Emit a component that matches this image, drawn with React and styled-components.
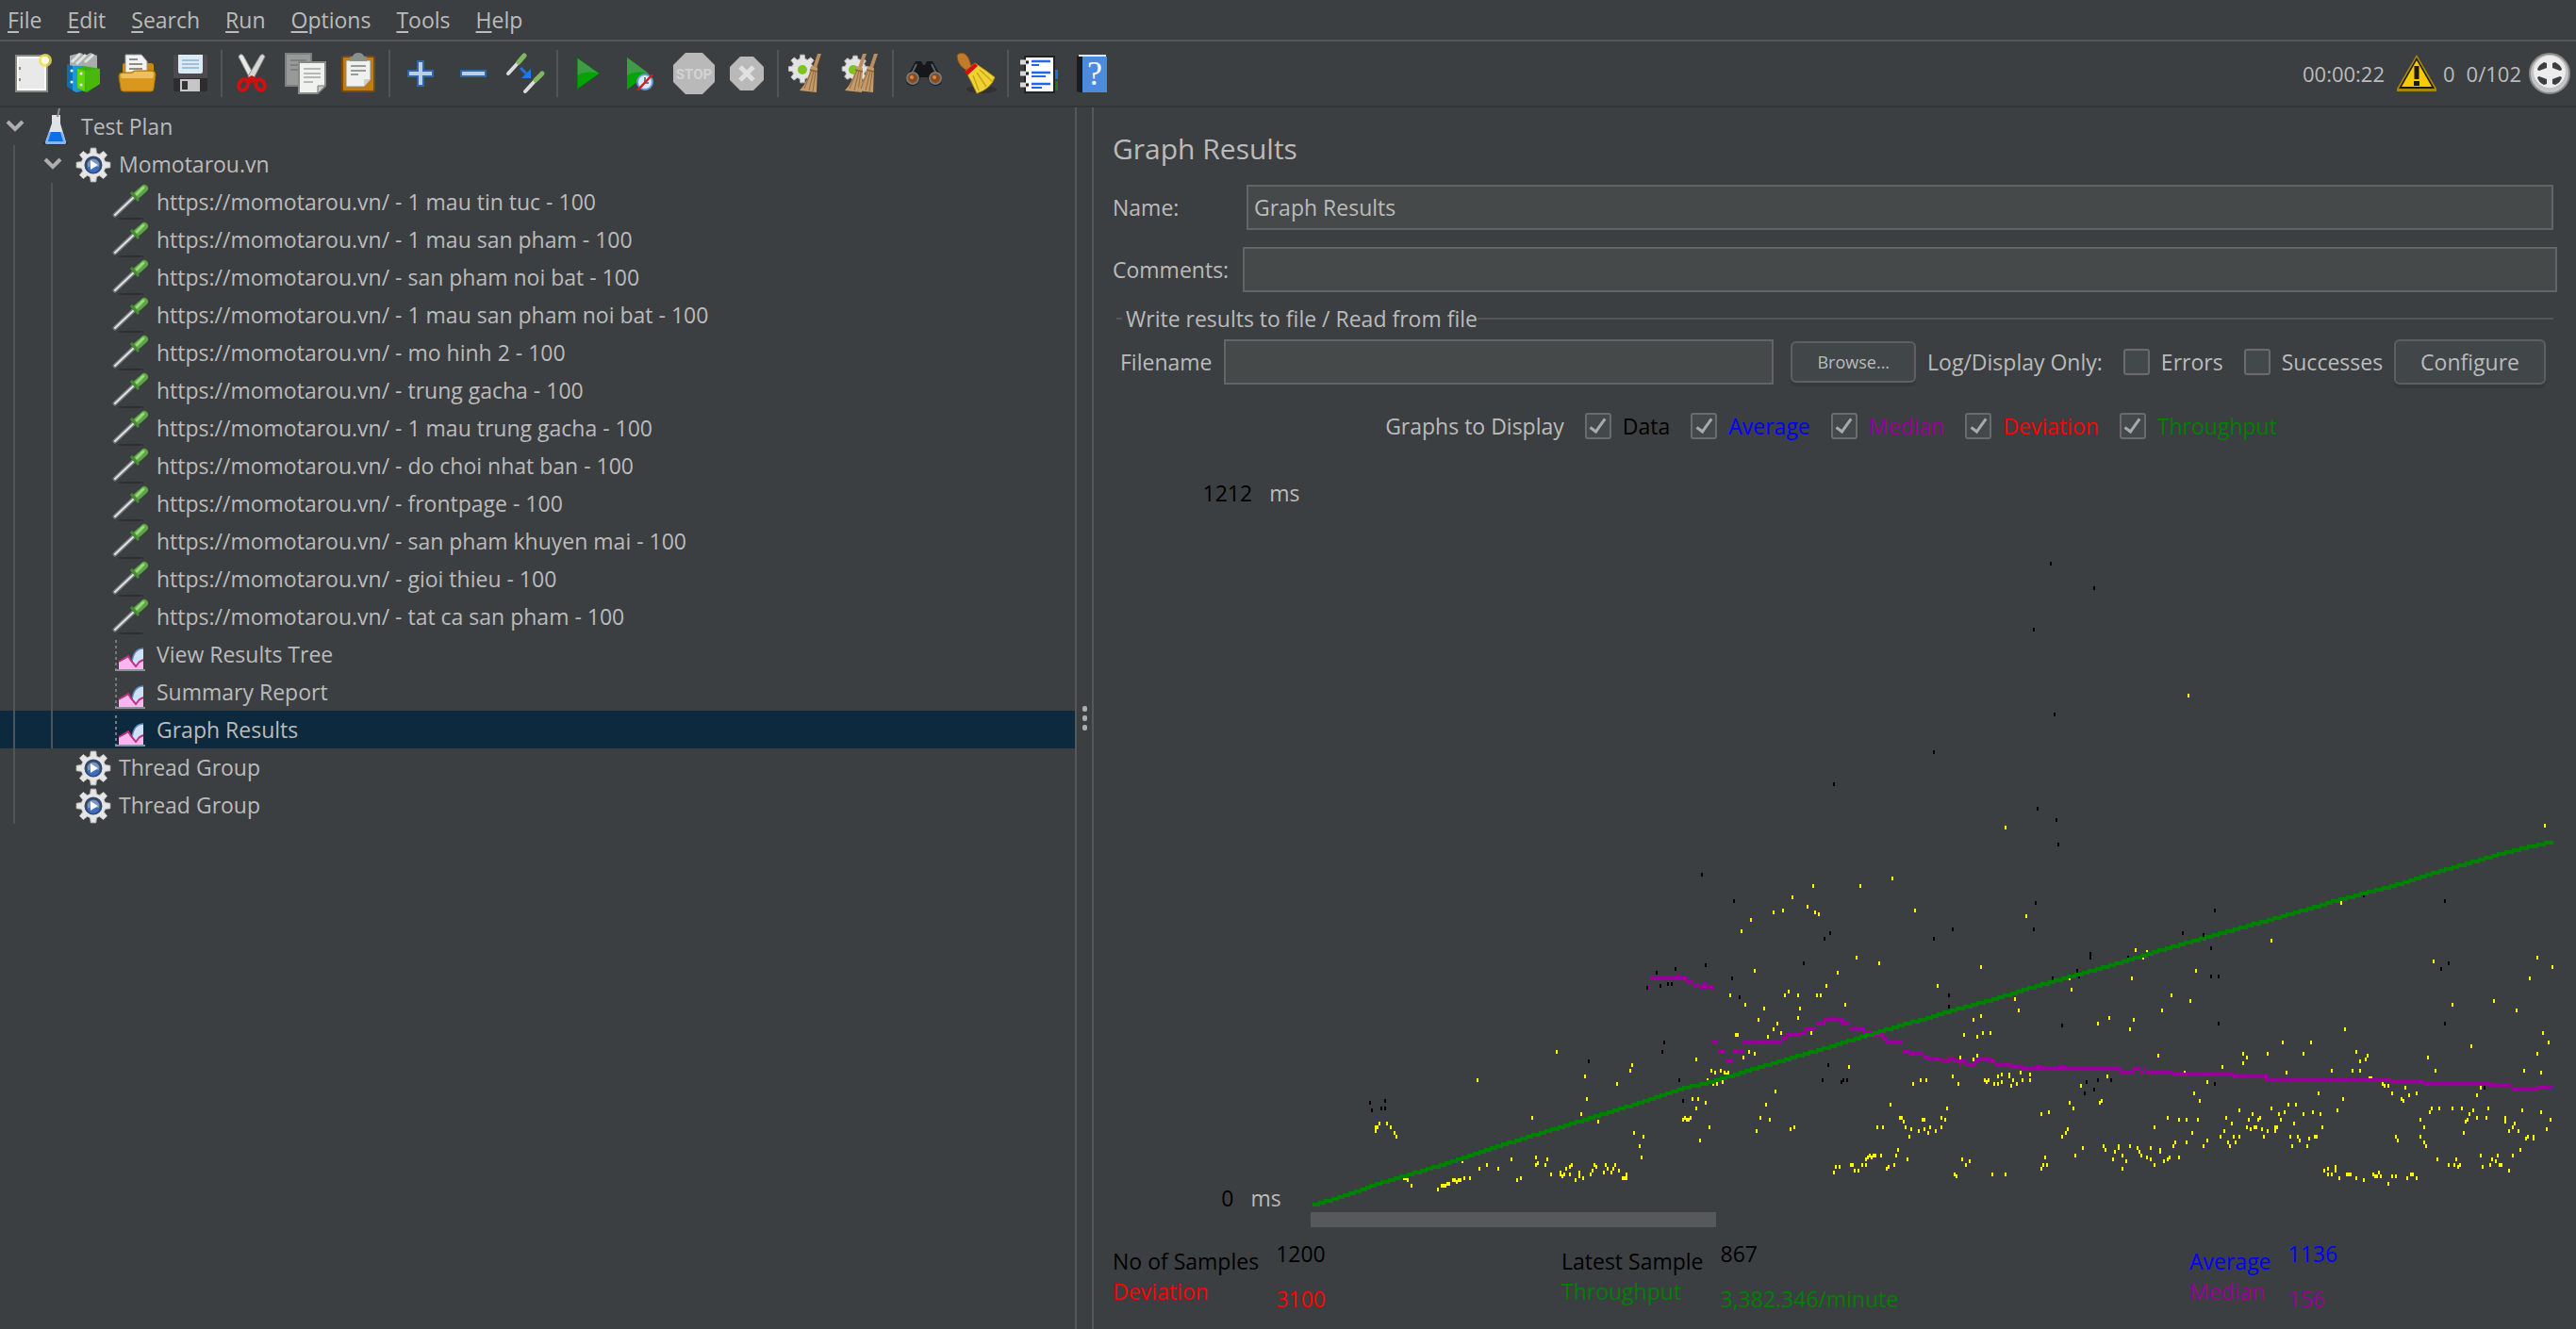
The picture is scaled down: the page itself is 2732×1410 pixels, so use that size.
import React from "react";
import styled, { createGlobalStyle } from "styled-components";

const Global = createGlobalStyle`
  *, *::before, *::after { box-sizing: border-box; }
  body {
    margin: 0;
    background: #3c3f41;
    color: #bbbbbb;
    font-family: "Open Sans", "Noto Sans", sans-serif;
    font-size: 23px;
    line-height: 32px;
  }
  button, input { font: inherit; color: inherit; }
`;

const Window = styled.div`
  display: flex;
  flex-direction: column;
  min-height: 100vh;
`;

/* ---------- menu ---------- */

const MenuBar = styled.nav`
  display: flex;
  align-items: center;
  gap: 27px;
  height: 44px;
  padding: 0 8px;
  border-bottom: 2px solid #555555;
`;

const MenuButton = styled.button`
  padding: 0;
  border: 0;
  background: none;
  line-height: 32px;
  white-space: nowrap;
  &::first-letter {
    text-decoration: underline;
    text-decoration-thickness: 2px;
    text-underline-offset: 3px;
  }
`;

/* ---------- toolbar ---------- */

const ToolBar = styled.div`
  display: flex;
  align-items: center;
  height: 70px;
  padding: 0 6px;
  border-bottom: 2px solid #323537;
`;

const ToolButton = styled.button`
  display: grid;
  place-items: center;
  width: 56px;
  height: 56px;
  padding: 0;
  border: 0;
  background: none;
  svg { width: 44px; height: 44px; }
`;

const ToolSeparator = styled.span`
  width: 2px;
  height: 50px;
  margin: 0 4px;
  background: #515456;
`;

const Status = styled.div`
  display: flex;
  align-items: center;
  gap: 12px;
  margin-left: auto;
  font-size: 22px;
  svg { width: 44px; height: 44px; }
`;

const Pair = styled.span`
  display: flex;
  align-items: center;
  gap: ${(p) => (p.$tight ? 6 : 8)}px;
`;

/* ---------- main split ---------- */

const Split = styled.div`
  flex: 1;
  display: grid;
  grid-template-columns: 1140fr 20px 1572fr;
`;

const Divider = styled.div`
  display: flex;
  flex-direction: column;
  align-items: center;
  justify-content: center;
  gap: 4px;
  border: solid #555759;
  border-width: 0 2px;
`;

const Dot = styled.span`
  width: 5px;
  height: 6px;
  border-radius: 2px;
  background: #adadad;
`;

const Tree = styled.ul`
  margin: 0;
  padding: 0;
  list-style: none;
`;

const TreeRow = styled.li`
  display: flex;
  align-items: center;
  height: 40px;
  line-height: 40px;
  white-space: nowrap;
  background: ${(p) => (p.$selected ? "#0d293e" : "transparent")};
`;

const Guide = styled.span`
  align-self: stretch;
  width: 40px;
  padding-left: 14px;
  &::before {
    content: "";
    display: block;
    width: 2px;
    height: 100%;
    background: #515456;
  }
`;

const Toggle = styled.span`
  display: grid;
  place-items: center;
  width: 32px;
  margin-right: 7px;
`;

const ToggleButton = styled.button`
  display: grid;
  place-items: center;
  width: 24px;
  height: 24px;
  padding: 0;
  border: 0;
  background: none;
`;

const NodeIcon = styled.span`
  display: grid;
  place-items: center;
  width: 40px;
  height: 40px;
  margin-right: 7px;
`;

/* ---------- right panel ---------- */

const Panel = styled.main`
  display: flex;
  flex-direction: column;
  padding: 24px 20px 8px;
  min-width: 0;
`;

const Title = styled.h1`
  margin: 0 0 18px;
  font-size: 30px;
  font-weight: 400;
  line-height: 40px;
`;

const Field = styled.div`
  display: flex;
  align-items: center;
  margin-bottom: 18px;
  padding-right: ${(p) => (p.$inset ? 4 : 0)}px;
`;

const FieldLabel = styled.label`
  width: ${(p) => p.$width}px;
  white-space: nowrap;
`;

const TextBox = styled.input`
  flex: 1;
  min-width: 0;
  height: 48px;
  padding: 0 6px;
  border: 2px solid #646464;
  border-radius: 0;
  background: #45494a;
  outline: none;
`;

const Group = styled.fieldset`
  margin: -6px 4px 28px;
  padding: 6px 8px 0 4px;
  border: 0;
  border-top: 2px solid #555555;
  min-width: 0;
`;

const Legend = styled.legend`
  padding: 0 0 0 4px;
  margin-left: 2px;
`;

const FileRow = styled.div`
  display: flex;
  align-items: center;
  gap: 12px;
  white-space: nowrap;
`;

const FileName = styled.div`
  flex: 1;
  display: flex;
  align-items: center;
  gap: 12px;
  margin-right: 6px;
`;

const PushButton = styled.button`
  height: ${(p) => (p.$small ? 44 : 48)}px;
  padding: 0 26px;
  border: 2px solid #5e6060;
  border-radius: 6px;
  background: #414648;
  box-shadow: 0 4px 0 #36393b;
  font-size: ${(p) => (p.$small ? 18 : 23)}px;
`;

const Check = styled.label`
  display: flex;
  align-items: center;
  gap: 12px;
  color: ${(p) => p.$color || "inherit"};
  white-space: nowrap;
`;

const Box = styled.input.attrs({ type: "checkbox" })`
  appearance: none;
  display: grid;
  place-items: center;
  width: 28px;
  height: 28px;
  margin: 0;
  border: 2px solid #6b6b6b;
  border-radius: 3px;
  background: #43494a;
  &:checked::before {
    content: "";
    width: 9px;
    height: 18px;
    margin-bottom: 4px;
    border: solid #a9a9a9;
    border-width: 0 3px 3px 0;
    transform: rotate(36deg);
  }
`;

const Checks = styled.div`
  display: flex;
  gap: 22px;
  margin: 0 ${(p) => (p.$tight ? 0 : 8)}px 0 10px;
`;

const DisplayRow = styled.div`
  display: flex;
  justify-content: center;
  align-items: center;
  height: 32px;
  gap: 12px;
  margin-bottom: 32px;
  white-space: nowrap;
`;

const ChartArea = styled.div`
  flex: 1;
  display: flex;
`;

const Axis = styled.div`
  display: flex;
  flex-direction: column;
  justify-content: space-between;
  align-items: center;
  width: 210px;
  padding: 7px 0 15px 84px;
`;

const AxisMark = styled.div`
  display: flex;
  gap: 18px;
  b { font-weight: 400; color: #000000; }
`;

const Plot = styled.div`
  flex: 1;
  display: flex;
  flex-direction: column;
  min-width: 0;
  svg {
    flex: 1;
    display: block;
    width: 100%;
    min-height: 786px;
  }
`;

const ScrollThumb = styled.div`
  width: 430px;
  height: 16px;
  background: #565859;
`;

const Stats = styled.div`
  display: grid;
  grid-template-columns: 476fr 666fr 390fr;
  margin-top: 4px;
`;

const Stat = styled.dl`
  display: flex;
  align-items: center;
  gap: 18px;
  margin: 0;
`;

const StatColumn = styled.div`
  display: flex;
  flex-direction: column;
  dt, dd { margin: 0; white-space: nowrap; }
  dd { line-height: 48px; }
`;

const Tint = styled.span`
  color: ${(p) => p.$color};
`;

/* ---------- toolbar drawings ---------- */

const Svg = ({ children, ...rest }) => (
  <svg viewBox="0 0 44 44" width="44" height="44" aria-hidden="true" {...rest}>{children}</svg>
);

const NewIcon = () => (
  <Svg>
    <rect x="5" y="3" width="33" height="38" fill="#e9e9e9" stroke="#888a85" strokeWidth="2" />
    <rect x="7" y="5" width="29" height="34" fill="none" stroke="#fbfbfb" strokeWidth="2" />
    <path d="M9 15v3M9 27v3" stroke="#888a85" strokeWidth="2" />
    <circle cx="36" cy="8" r="7" fill="#f4e04d" opacity=".8" />
    <circle cx="36" cy="8" r="4" fill="#fffde0" />
  </Svg>
);

const TemplatesIcon = () => (
  <Svg>
    <path d="M6 3l12-3 4 3 6-3 7 3v16H6z" fill="#a9adab" />
    <path d="M8 10L17 1M13 12L23 2M22 10l9-8" stroke="#dfe2e1" strokeWidth="3" />
    <path d="M3 12l6 2v26l-6-4z" fill="#0b6fb0" />
    <path d="M9 14h12v26l-8 2-4-2z" fill="#1d97dc" />
    <circle cx="8" cy="19" r="1.500" fill="#fff" />
    <circle cx="8" cy="31" r="1.500" fill="#fff" />
    <path d="M14 17l7-3 17 3v16l-14 9-10-4z" fill="#3fae12" />
    <path d="M14 17l8 2v22l-8-4z" fill="#5ed60b" />
    <path d="M22 19l16-2v16l-14 8z" fill="#48b80d" />
    <circle cx="18" cy="22" r="1.500" fill="#fff" />
    <circle cx="18" cy="34" r="1.500" fill="#fff" />
  </Svg>
);

const OpenIcon = () => (
  <Svg>
    <path d="M6 13q0-2 2-2h28q3 0 3 3v24H6z" fill="#c98a0a" />
    <path d="M9 2h17l6 7v16H9z" fill="#f2f2f0" stroke="#999" strokeWidth="1" />
    <path d="M13 7h9M13 12h14M13 17h14" stroke="#8c8c88" strokeWidth="2" />
    <path d="M2 25q0-4 4-4h9l4-2h18q4 0 4 4l-2 15q0 3-3 3H7q-3 0-3-3z" fill="#d9981d" stroke="#a86f05" strokeWidth="1" />
    <path d="M4 24q0-2 2-2h10l3-2h18q2 0 2 3l-1 4H5z" fill="#eebf5e" />
  </Svg>
);

const SaveIcon = () => (
  <Svg>
    <rect x="4" y="2" width="36" height="39" rx="2" fill="#4d4a4e" />
    <path d="M4 27h36v12q0 2-2 2H6q-2 0-2-2z" fill="#2e2c2f" />
    <path d="M9 2h26v18q0 2-2 2H11q-2 0-2-2z" fill="#dceaf6" />
    <path d="M13 8h18M13 12h18M13 16h18" stroke="#8fb1d3" strokeWidth="1.500" />
    <rect x="11" y="28" width="21" height="13" fill="#c6c6c6" />
    <rect x="13" y="30" width="6" height="9" fill="#333" />
  </Svg>
);

const CutIcon = () => (
  <Svg>
    <path d="M7 4q2-4 5-1l12 22-3 6z" fill="#e9e9e7" stroke="#9a9a98" strokeWidth="1" />
    <path d="M35 4q-2-4-5-1L17 25l4 6z" fill="#d6d6d4" stroke="#8d8d8b" strokeWidth="1" />
    <ellipse cx="12" cy="34" rx="4.500" ry="6" transform="rotate(28 12 34)" fill="none" stroke="#d3100f" strokeWidth="4" />
    <ellipse cx="30" cy="34" rx="4.500" ry="6" transform="rotate(-28 30 34)" fill="none" stroke="#d3100f" strokeWidth="4" />
    <path d="M14 28l7-4 7 4-7 4z" fill="#d3100f" />
  </Svg>
);

const CopyIcon = () => (
  <Svg>
    <rect x="1" y="1" width="27" height="34" fill="#979a99" stroke="#7d807f" strokeWidth="2" />
    <path d="M6 8h17M6 13h17M6 18h12" stroke="#7d807f" strokeWidth="2" />
    <path d="M15 10h28v25l-8 8H15z" fill="#f1f1ef" stroke="#888a85" strokeWidth="2" />
    <path d="M43 35h-8v8z" fill="#c9c9c5" stroke="#777" strokeWidth="1" />
    <path d="M20 17h18M20 22h18M20 26h18M20 31h10" stroke="#a3a5a1" strokeWidth="1.500" />
  </Svg>
);

const PasteIcon = () => (
  <Svg>
    <rect x="5" y="4" width="34" height="37" rx="2" fill="#c17d11" stroke="#7a4c07" strokeWidth="2" />
    <path d="M9 8h26v20l-7 8H9z" fill="#f0f0ee" stroke="#8b8b88" strokeWidth="1" />
    <path d="M35 28h-7v8z" fill="#cfcfcb" />
    <path d="M14 14h16M14 19h16M14 23h8" stroke="#999b97" strokeWidth="2" />
    <path d="M13 9V5q0-1 3-1 1-4 6-4t6 4q3 0 3 1v4z" fill="#8c8e89" />
  </Svg>
);

const PlusIcon = () => (
  <Svg>
    <path d="M19 9h6v10h10v6H25v10h-6V25H9v-6h10z" fill="#b8cfe9" stroke="#3465a4" strokeWidth="2" />
  </Svg>
);

const MinusIcon = () => (
  <Svg>
    <rect x="9" y="19" width="26" height="6" fill="#b8cfe9" stroke="#3465a4" strokeWidth="2" />
  </Svg>
);

const ToggleIcon = () => (
  <Svg>
    <path d="M3 22L14 10" stroke="#dcdcdc" strokeWidth="4" strokeLinecap="round" />
    <path d="M14 10l6-7" stroke="#7fb860" strokeWidth="5" strokeLinecap="round" />
    <path d="M21 41l11-12" stroke="#dcdcdc" strokeWidth="4" strokeLinecap="round" />
    <path d="M32 29l7-7" stroke="#7fb860" strokeWidth="5" strokeLinecap="round" />
    <path d="M16 16l6 6" stroke="#2a6fdc" strokeWidth="3" />
    <path d="M27 17v10H17z" fill="#1f78f0" />
  </Svg>
);

const StartIcon = () => (
  <Svg>
    <path d="M10 5l24 17-24 17z" fill="#06a306" />
    <path d="M10 5l24 17q-14-4-24 2z" fill="#3f9b45" />
    <path d="M10 5l24 17-24 17z" fill="none" stroke="#07690c" strokeWidth="1" />
  </Svg>
);

const StartNoPauseIcon = () => (
  <Svg>
    <path d="M7 5l23 17L7 39z" fill="#06a306" />
    <path d="M7 5l23 17Q17 18 7 24z" fill="#3f9b45" />
    <circle cx="26" cy="31" r="8" fill="#dce8f6" stroke="#6a9bd0" strokeWidth="2" />
    <path d="M26 26v6h4" stroke="#556" strokeWidth="1.500" fill="none" />
    <path d="M18 40l16-17" stroke="#d41b1b" strokeWidth="2.500" />
  </Svg>
);

const StopIcon = () => (
  <Svg>
    <path d="M13 0h18l13 13v18L31 44H13L0 31V13z" fill="#b9b9b9" />
    <text x="22" y="28" textAnchor="middle" fontSize="15" fontWeight="700" fontFamily="Roboto, sans-serif" fill="#d3d3d3">STOP</text>
  </Svg>
);

const ShutdownIcon = () => (
  <Svg>
    <path d="M15 4h14l11 11v14L29 40H15L4 29V15z" fill="#b9b9b9" />
    <path d="M15 15l14 14M29 15L15 29" stroke="#e0e0e0" strokeWidth="5" />
  </Svg>
);

const gearPath = (cx, cy, r, inner) => {
  const pts = [];
  for (let i = 0; i < 8; i += 1) {
    [[-0.26, inner], [-0.15, r], [0.15, r], [0.26, inner]].forEach(([da, rad]) => {
      const a = (i * Math.PI) / 4 + da;
      pts.push(`${(cx + rad * Math.cos(a)).toFixed(1)},${(cy + rad * Math.sin(a)).toFixed(1)}`);
    });
  }
  return pts.join(" ");
};

const Whisk = ({ x }) => (
  <g transform={`translate(${x} 0)`}>
    <path d="M33 1h4l-5 15h-4z" fill="#b98d5d" />
    <path d="M26 14l7 2-1 26-18-2q9-9 12-26z" fill="#c39a6b" />
    <path d="M27 18l-8 20M29 19l-5 21M31 20l-3 21" stroke="#94693c" strokeWidth="1" />
    <path d="M25 18l8 2" stroke="#8d6337" strokeWidth="1.500" />
  </g>
);

const ClearIcon = () => (
  <Svg>
    <polygon points={gearPath(15, 17, 15, 11)} fill="#e3e3e3" stroke="#b5b5b5" strokeWidth="1" />
    <circle cx="15" cy="18" r="5" fill="#7cc51e" />
    <Whisk x={-2} />
  </Svg>
);

const ClearAllIcon = () => (
  <Svg>
    <polygon points={gearPath(15, 17, 14, 11)} fill="#e3e3e3" stroke="#b5b5b5" strokeWidth="1" />
    <circle cx="13" cy="18" r="5" fill="#7cc51e" />
    <Whisk x={-10} />
    <Whisk x={2} />
  </Svg>
);

const SearchIcon = () => (
  <Svg>
    <path d="M13 9h6l2 4h2l2-4h6l9 16q3 9-5 10-8 0-9-9h-8q-1 9-9 9-8-1-5-10z" fill="#15171a" />
    <path d="M14 12l-6 12M30 12l6 12" stroke="#5d6165" strokeWidth="2" />
    <circle cx="10" cy="27" r="6" fill="#8d4a17" stroke="#74787b" strokeWidth="2" />
    <circle cx="34" cy="27" r="6" fill="#8d4a17" stroke="#74787b" strokeWidth="2" />
    <circle cx="9" cy="26" r="2" fill="#d18a4e" />
    <circle cx="33" cy="26" r="2" fill="#d18a4e" />
  </Svg>
);

const ResetSearchIcon = () => (
  <Svg>
    <ellipse cx="27" cy="39" rx="16" ry="4" fill="#2f3133" />
    <path d="M1 3q2-4 8-2 5 3 7 14l-6 3Q1 12 1 3z" fill="#c07c2c" stroke="#8a5314" strokeWidth="1" />
    <path d="M10 19l10-8q12 8 21 15-4 12-19 17Q17 32 10 19z" fill="#f0d235" stroke="#b79a10" strokeWidth="1" />
    <path d="M9 20l11-9 3 3-11 10z" fill="#d3100f" />
    <path d="M18 24l6 16M22 21l10 15M25 18l13 12" stroke="#c7a714" strokeWidth="1.500" />
  </Svg>
);

const FunctionIcon = () => (
  <Svg>
    <rect x="34" y="18" width="8" height="10" fill="#1f6be0" />
    <rect x="34" y="30" width="8" height="10" fill="#1c7d12" />
    <rect x="7" y="4" width="31" height="38" fill="#fff" stroke="#222" strokeWidth="2" />
    <path d="M2 10h9M2 22h9M2 34h9" stroke="#d9d9d9" strokeWidth="5" />
    <path d="M8 10h3M8 22h3M8 34h3" stroke="#222" strokeWidth="3" />
    <path d="M14 9h20M14 21h20M14 33h20" stroke="#2366e8" strokeWidth="2.500" />
    <path d="M14 13h8M14 25h15M14 37h11" stroke="#2366e8" strokeWidth="2" />
  </Svg>
);

const HelpIcon = () => (
  <Svg>
    <path d="M6 4l4-2h27v40H10l-4-1z" fill="#1b1b1d" />
    <rect x="12" y="4" width="26" height="38" fill="#4d8ade" />
    <path d="M8 3h29" stroke="#e8e8e8" strokeWidth="2" />
    <text x="25" y="34" textAnchor="middle" fontSize="36" fontFamily="Liberation Serif, serif" fill="#f4f8ff">?</text>
  </Svg>
);

const WarningIcon = () => (
  <Svg>
    <path d="M22 2L1 38v3h42v-3z" fill="#a5870b" />
    <path d="M22 5L3 38h38z" fill="#1d1a05" />
    <path d="M22 8L6 36h32z" fill="#f5cb05" />
    <path d="M22 14v14" stroke="#1d1a05" strokeWidth="5" />
    <rect x="19" y="30" width="6" height="5" fill="#1d1a05" />
  </Svg>
);

const ExpandIcon = () => (
  <Svg>
    <circle cx="22" cy="22" r="21" fill="#c4c4c4" stroke="#8a8a8a" strokeWidth="2" />
    <circle cx="22" cy="20" r="17" fill="#ececec" />
    <path d="M16 10l3 1v5l-8 3-2-1q1-5 7-8zM28 10l-3 1v5l8 3 2-1q-1-5-7-8zM16 34l3-1v-5l-8-3-2 1q1 5 7 8zM28 34l-3-1v-5l8-3 2 1q-1 5-7 8z" fill="#3b3d3f" />
  </Svg>
);

/* ---------- tree drawings ---------- */

const Chevron = () => (
  <svg viewBox="0 0 20 14" width="20" height="14" aria-hidden="true">
    <path d="M2 2l8 8 8-8" fill="none" stroke="#adadad" strokeWidth="4" />
  </svg>
);

const FlaskIcon = () => (
  <svg viewBox="0 0 40 40" width="40" height="40" aria-hidden="true">
    <ellipse cx="20" cy="38" rx="14" ry="2" fill="#2c2e30" />
    <path d="M16 8h9v9l6 20q0 2-3 2H12q-3 0-3-2l7-20z" fill="#dfe3e6" />
    <path d="M13 26h14l4 11q0 2-3 2H12q-3 0-3-2z" fill="#86b4ee" />
    <path d="M15 26h10l3 10H12z" fill="#0b6fe8" />
    <path d="M22 10l2-9" stroke="#8d9091" strokeWidth="2" />
  </svg>
);

const GearIcon = () => (
  <svg viewBox="0 0 40 40" width="40" height="40" aria-hidden="true">
    <polygon points={gearPath(20, 21, 18, 13)} fill="#e6e6e6" stroke="#c9c9c9" strokeWidth="1" />
    <circle cx="20" cy="21" r="8" fill="#7d93b8" stroke="#31486f" strokeWidth="3" />
    <path d="M13 23q2 6 7 6t7-6z" fill="#3b6dc0" />
    <path d="M17 16l8 5-8 5z" fill="#f5f8fc" />
  </svg>
);

const SamplerIcon = () => (
  <svg viewBox="0 0 40 40" width="40" height="40" aria-hidden="true">
    <ellipse cx="20" cy="38" rx="14" ry="1" fill="#2b2d2f" />
    <path d="M3 34L23 15" stroke="#737677" strokeWidth="5" strokeLinecap="round" />
    <path d="M3 34L23 15" stroke="#e0e2e2" strokeWidth="2" strokeLinecap="round" />
    <path d="M26 13l8-7" stroke="#5ea544" strokeWidth="8" strokeLinecap="round" />
    <path d="M26 12l7-7" stroke="#9ad67e" strokeWidth="3" strokeLinecap="round" />
    <path d="M20 10l8 9" stroke="#4a8a36" strokeWidth="3" />
  </svg>
);

const ListenerIcon = () => (
  <svg viewBox="0 0 40 40" width="40" height="40" aria-hidden="true">
    <path d="M4 5v31" stroke="#77797b" strokeWidth="2" strokeDasharray="3 3" />
    <path d="M3 37h32" stroke="#8d8f95" strokeWidth="2" />
    <path d="M21 28Q23 14 33 14v22H22z" fill="#cfe1f8" />
    <path d="M21 28Q23 14 33 14" fill="none" stroke="#5d88c4" strokeWidth="1.500" />
    <path d="M7 36V28l5-2 5-3 3 4 4 6 5-6h4v9z" fill="#fbb5f0" />
    <path d="M7 28l5-3 5-3 3 5 5 6 4-5 4-2" fill="none" stroke="#b83478" strokeWidth="2" />
  </svg>
);

/* ---------- chart data ---------- */

// Readings are stored per strip: a strip's left edge, its horizontal
// resolution in units per pixel, and the readings in those units.
const STRIPS = [
  {
    left: -10,
    unit: 2.306,
    dark: "982,249 1060,322 1295,422 1281,439 1231,512 987,517 917,529 871,540 877,574 848,585 899,569 904,569 1056,557 1074,613 890,742 881,770 705,803 1291,814 927,859 1277,854 1323,865 1328,859 1337,859 932,921 170,926 175,949 203,921 207,938 198,943",
    bright:
      "1254,282 1369,282 1448,260 1203,316 1503,350 1240,344 1180,350 1259,361 1268,366 1153,361 1102,378 1079,417 1360,495 1415,512 1107,534 1314,540 1286,574 1194,596 1217,602 1185,607 1263,607 1272,607 1051,602 1088,630 1332,630 1134,646 1222,646 1213,674 1120,680 1166,686 1157,708 1175,714 1249,716 1065,725 1069,725 1143,730 1097,770 1111,781 1083,792 968,797 1341,820 811,814 803,826 807,826 627,775 696,848 433,859 774,870 701,910 687,960 567,971 728,982 180,1010 184,994 188,994 193,988 212,988 217,999 221,999 230,1016 235,1027 816,1016 839,1027 830,1055 834,1089 977,1038 1000,994 964,938 991,926 959,910 973,910 940,966 936,977 945,977 949,977 954,971 996,854 1005,826 1014,837 1024,826 1028,826 1037,837 1041,840 1046,837 1010,868 1019,870 1033,865 1162,893 1139,932 1125,971 1148,977 1116,1010 1199,1005 1208,999 1498,870 1517,854 1443,932 1466,971 1470,966 1475,982 1480,994 1411,999 1425,999 1489,1022 1494,1005 1512,1010 1521,977 " +
      "253,1147 258,1149 262,1156 271,1173 336,1184 345,1173 350,1173 354,1168 359,1162 364,1167 373,1156 377,1156 382,1161 387,1156 391,1156 401,1150 414,1150 396,1096 438,1122 456,1106 484,1122 516,1094 526,1156 539,1150 572,1089 576,1106 581,1101 595,1106 604,1094 613,1139 632,1139 636,1133 641,1145 645,1139 650,1122 655,1139 659,1117 664,1111 669,1156 673,1156 678,1145 682,1133 691,1150 710,1139 714,1128 719,1106 724,1117 742,1133 747,1111 751,1122 760,1133 765,1122 770,1111 779,1128 785,1150 789,1150 794,1150 797,1139 " +
      "1304,1133 1309,1117 1318,1117 1346,1111 1351,1111 1355,1128 1365,1128 1374,1111 1379,1106 1383,1094 1388,1089 1392,1083 1397,1086 1401,1083 1406,1083 1420,1078 1430,1122 1434,1122 1438,1117 1452,1106 1457,1083 1462,1066 1485,1094",
    median: [
      [850, 855, 580], [855, 861, 552], [858, 944, 557], [918, 926, 550], [943, 960, 568], [960, 972, 574], [971, 1000, 580], [984, 990, 573], [997, 1008, 585],
      [1007, 1017, 742], [1018, 1028, 770], [1025, 1036, 775], [1036, 1057, 798], [1044, 1050, 803], [1057, 1070, 775], [1067, 1086, 770], [1078, 1083, 742], [1085, 1108, 742], [1092, 1170, 747],
      [1168, 1178, 742], [1177, 1190, 731], [1186, 1224, 725], [1222, 1235, 714], [1233, 1261, 708], [1261, 1282, 686], [1277, 1300, 680], [1298, 1304, 674], [1300, 1326, 680], [1318, 1340, 686],
      [1340, 1378, 708], [1374, 1396, 714], [1390, 1426, 725], [1422, 1434, 731], [1430, 1448, 742], [1444, 1470, 747], [1469, 1490, 770], [1486, 1516, 776], [1508, 1524, 781], [1522, 1534, 792],
    ],
    throughput: "28,1228 95,1203 190,1163 270,1134 350,1106 500,1045 700,971 850,915 930,882 1000,862 1100,825 1270,765 1400,717 1480,688 1522,675",
  },
  {
    left: 650,
    unit: 2.266,
    dark: "276,53 321,86 326,159 271,333 267,411 68,406 27,439 399,484 403,495 371,533 376,547 312,555 59,602 63,641 331,697 621,422 671,427 698,350 689,467 490,493 711,546 693,551 707,691 1060,310 1255,327 1260,512 1246,529 1251,686 394,865 417,859 453,854 408,887 389,898 702,870 1350,881 308,-675 412,-607 263,-484 317,-227 23,-115 -217,-20",
    bright:
      "639,-283 195,109 1495,103 249,372 136,518 36,574 222,618 231,652 353,557 358,590 512,473 535,476 530,495 503,557 598,607 575,652 643,624 657,534 838,445 1006,333 448,674 421,691 507,680 494,708 122,680 140,669 145,714 163,719 131,730 99,725 1015,708 865,742 933,747 562,786 766,781 775,792 770,809 825,781 911,781 720,820 1228,506 1273,630 1373,624 1427,652 1459,557 1477,495 1512,518 1491,719 1504,742 1473,781 1482,837 1445,831 1318,758 1214,792 1232,826 1038,775 1047,803 1069,786 1065,797 1033,826 1051,831 983,826 874,837 626,835 90,792 127,786 118,797 " +
      "9,854 72,848 86,870 149,859 153,863 158,859 172,870 177,870 181,848 186,865 190,842 204,848 208,842 213,876 217,854 226,870 235,837 240,859 254,859 258,842 380,876 444,848 680,865 652,898 666,921 1074,849 1078,852 1105,870 1110,876 1119,876 1128,898 1160,881 1151,910 1155,921 1169,904 1187,898 1337,879 1332,904 1010,910 951,898 " +
      "349,926 362,943 281,960 303,954 426,926 430,921 345,1005 340,1016 335,1027 294,1089 299,1106 290,1111 285,1122 385,1061 367,1078 55,938 41,966 50,977 45,994 0,977 4,1005 13,1016 18,999 31,1010 95,1094 109,1100 104,1111 77,1139 81,1145 167,1139 199,1139 " +
      "435,1055 439,1066 467,1055 471,1061 462,1072 457,1094 480,1078 485,1100 476,1122 498,1055 516,1061 521,1072 525,1083 544,1061 539,1089 548,1094 557,1106 567,1066 571,1072 580,1100 585,1094 593,1089 616,1089 602,1055 607,1044 634,1044 553,994 589,971 612,977 630,977 661,977 648,1016 675,1050 684,1038 716,1027 725,1010 734,1044 738,1050 752,1044 747,1022 761,1022 729,971 743,988 757,949 793,960 784,977 779,999 788,1005 797,994 802,999 806,977 811,966 815,1005 820,1027 829,1010 834,943 843,1010 847,999 852,999 856,960 861,977 870,954 879,932 897,932 892,988 883,1027 888,1050 901,1022 906,1038 915,960 920,1055 929,1033 942,1022 947,1027 938,954 956,960 960,994 997,949 " +
      "965,1128 970,1122 974,1134 979,1134 988,1117 992,1128 1001,1150 1019,1134 1024,1139 1028,1139 1042,1150 1056,1156 1083,1139 1087,1145 1092,1145 1096,1133 1101,1145 1115,1162 1124,1145 1137,1145 1164,1150 1173,1139 1178,1139 1183,1150 " +
      "1133,1022 1142,1038 1196,977 1201,999 1192,1022 1205,1044 1210,1055 1219,954 1223,943 1241,943 1269,943 1296,943 1323,949 1314,960 1328,966 1305,982 1309,977 1300,1016 1359,938 1355,966 1237,1094 1264,1106 1278,1106 1282,1094 1291,1106 1287,1117 1341,1078 1346,1117 1364,1106 1368,1094 1377,1100 1382,1083 1386,1106 1391,1111 1409,1128 1414,1078 1436,1066 1396,982 1400,971 1405,1010 1418,999 1423,988 1432,1010 1441,949 1454,1022 1450,1033 1464,1027 1468,1033 1486,954 1500,1005 1509,977",
    median: [
      [0, 14, 792], [10, 46, 797], [26, 42, 793], [46, 62, 803], [60, 76, 797], [74, 102, 803], [84, 90, 812], [93, 104, 809], [102, 126, 814], [124, 134, 803], [132, 168, 797], [154, 172, 803],
      [172, 212, 814], [210, 238, 820], [237, 474, 825], [269, 284, 819], [323, 338, 819], [473, 506, 837], [505, 519, 825], [519, 532, 837], [531, 537, 825], [537, 598, 837], [596, 746, 842], [745, 828, 848],
      [820, 918, 854], [917, 1125, 859], [1124, 1201, 865], [1200, 1362, 870], [1361, 1416, 876], [1415, 1452, 882], [1450, 1476, 887], [1474, 1513, 881],
    ],
    throughput: "0,675 60,652 160,619 270,577 360,546 470,508 580,466 700,425 840,377 1000,320 1120,282 1230,239 1370,190 1450,165 1513,148",
  },
];

const TOP = 340;
const ROW_UNIT = 2.8;
const even = (n) => Math.round(n / 2) * 2;
const parse = (text) => text.split(" ").map((p) => p.split(",").map(Number));
const toX = (strip, v) => strip.left + v / strip.unit;
const toY = (v) => TOP + v / ROW_UNIT;

const marks = (strip, text) =>
  parse(text)
    .map(([x, y]) => `M${even(toX(strip, x) - 1)} ${even(toY(y) - 2)}h2v4h-2z`)
    .join("");

const medianPath = (strip) =>
  strip.median
    .map(([a, b, y]) => {
      const x1 = even(toX(strip, a));
      const x2 = Math.max(x1 + 2, even(toX(strip, b)));
      return `M${x1} ${even(toY(y) - 2)}H${x2}v4H${x1}z`;
    })
    .join("");

const throughputPath = () => {
  const pts = STRIPS.flatMap((s) => parse(s.throughput).map(([x, y]) => [toX(s, x), toY(y)]));
  let d = "";
  let k = 0;
  for (let x = even(pts[0][0]); x <= pts[pts.length - 1][0] - 2; x += 2) {
    while (k < pts.length - 2 && pts[k + 1][0] <= x) k += 1;
    const [x1, y1] = pts[k];
    const [x2, y2] = pts[k + 1];
    const y = x2 === x1 ? y1 : y1 + ((x - x1) * (y2 - y1)) / (x2 - x1);
    d += `M${x} ${even(y - 2)}h4v4h-4z`;
  }
  return d;
};

const Chart = () => (
  <svg viewBox="0 0 1322 786" preserveAspectRatio="none" shapeRendering="crispEdges" role="img" aria-label="Response times">
    {STRIPS.map((s) => (
      <g key={s.left}>
        <path d={marks(s, s.dark)} fill="#000000" />
        <path d={marks(s, s.bright)} fill="#ffff00" />
        <path d={medianPath(s)} fill="#990099" />
      </g>
    ))}
    <path d={throughputPath()} fill="#008000" />
  </svg>
);

/* ---------- content ---------- */

const MENUS = ["File", "Edit", "Search", "Run", "Options", "Tools", "Help"];

const TOOLS = [
  [["New", NewIcon], ["Templates", TemplatesIcon], ["Open", OpenIcon], ["Save", SaveIcon]],
  [["Cut", CutIcon], ["Copy", CopyIcon], ["Paste", PasteIcon]],
  [["Expand all", PlusIcon], ["Collapse all", MinusIcon], ["Toggle", ToggleIcon]],
  [["Start", StartIcon], ["Start no pauses", StartNoPauseIcon], ["Stop", StopIcon], ["Shutdown", ShutdownIcon]],
  [["Clear", ClearIcon], ["Clear all", ClearAllIcon]],
  [["Search tree", SearchIcon], ["Reset search", ResetSearchIcon]],
  [["Function helper", FunctionIcon], ["Help contents", HelpIcon]],
];

const PAGES = [
  "1 mau tin tuc", "1 mau san pham", "san pham noi bat", "1 mau san pham noi bat", "mo hinh 2", "trung gacha",
  "1 mau trung gacha", "do choi nhat ban", "frontpage", "san pham khuyen mai", "gioi thieu", "tat ca san pham",
];

const NODES = [
  { label: "Test Plan", depth: 0, Icon: FlaskIcon, open: true },
  { label: "Momotarou.vn", depth: 1, Icon: GearIcon, open: true },
  ...PAGES.map((page) => ({ label: `https://momotarou.vn/ - ${page} - 100`, depth: 2, Icon: SamplerIcon })),
  { label: "View Results Tree", depth: 2, Icon: ListenerIcon },
  { label: "Summary Report", depth: 2, Icon: ListenerIcon },
  { label: "Graph Results", depth: 2, Icon: ListenerIcon, selected: true },
  { label: "Thread Group", depth: 1, Icon: GearIcon },
  { label: "Thread Group", depth: 1, Icon: GearIcon },
];

const SERIES = [
  ["Data", "#000000"], ["Average", "#0000ff"], ["Median", "#990099"], ["Deviation", "#ff0000"], ["Throughput", "#008000"],
];

const STATS = [
  [["No of Samples", "1200", "#000000"], ["Deviation", "3100", "#ff0000"]],
  [["Latest Sample", "867", "#000000"], ["Throughput", "3,382.346/minute", "#008000"]],
  [["Average", "1136", "#0000ff"], ["Median", "156", "#990099"]],
];

export default function App() {
  return (
    <Window>
      <Global />
      <MenuBar>
        {MENUS.map((m) => <MenuButton key={m}>{m}</MenuButton>)}
      </MenuBar>

      <ToolBar>
        {TOOLS.map((group, i) => (
          <React.Fragment key={group[0][0]}>
            {i > 0 && <ToolSeparator />}
            {group.map(([name, Icon]) => (
              <ToolButton key={name} aria-label={name}><Icon /></ToolButton>
            ))}
          </React.Fragment>
        ))}
        <Status>
          <span>00:00:22</span>
          <Pair $tight><WarningIcon /><span>0</span></Pair>
          <Pair><span>0/102</span><ExpandIcon /></Pair>
        </Status>
      </ToolBar>

      <Split>
        <Tree role="tree">
          {NODES.map(({ label, depth, Icon, open, selected }, i) => (
            <TreeRow key={i} role="treeitem" aria-selected={!!selected} $selected={selected}>
              {Array.from({ length: depth }, (_, d) => <Guide key={d} />)}
              <Toggle>{open && <ToggleButton aria-label="Collapse"><Chevron /></ToggleButton>}</Toggle>
              <NodeIcon><Icon /></NodeIcon>
              {label}
            </TreeRow>
          ))}
        </Tree>

        <Divider><Dot /><Dot /><Dot /></Divider>

        <Panel>
          <Title>Graph Results</Title>
          <Field $inset>
            <FieldLabel htmlFor="name" $width={142}>Name:</FieldLabel>
            <TextBox id="name" defaultValue="Graph Results" />
          </Field>
          <Field>
            <FieldLabel htmlFor="comments" $width={138}>Comments:</FieldLabel>
            <TextBox id="comments" />
          </Field>

          <Group>
            <Legend>Write results to file / Read from file</Legend>
            <FileRow>
              <FileName>
                <label htmlFor="filename">Filename</label>
                <TextBox id="filename" />
              </FileName>
              <PushButton $small>Browse...</PushButton>
              <span>Log/Display Only:</span>
              <Checks $tight>
                <Check><Box />Errors</Check>
                <Check><Box />Successes</Check>
              </Checks>
              <PushButton>Configure</PushButton>
            </FileRow>
          </Group>

          <DisplayRow>
            <span>Graphs to Display</span>
            <Checks>
              {SERIES.map(([name, color]) => (
                <Check key={name} $color={color}><Box defaultChecked />{name}</Check>
              ))}
            </Checks>
          </DisplayRow>

          <ChartArea>
            <Axis>
              <AxisMark><b>1212</b>ms</AxisMark>
              <AxisMark><b>0</b>ms</AxisMark>
            </Axis>
            <Plot>
              <Chart />
              <ScrollThumb />
            </Plot>
          </ChartArea>

          <Stats>
            {STATS.map((rows) => (
              <Stat key={rows[0][0]}>
                <StatColumn>
                  {rows.map(([name, , color]) => <dt key={name}><Tint $color={color}>{name}</Tint></dt>)}
                </StatColumn>
                <StatColumn>
                  {rows.map(([name, value, color]) => <dd key={name}><Tint $color={color}>{value}</Tint></dd>)}
                </StatColumn>
              </Stat>
            ))}
          </Stats>
        </Panel>
      </Split>
    </Window>
  );
}
